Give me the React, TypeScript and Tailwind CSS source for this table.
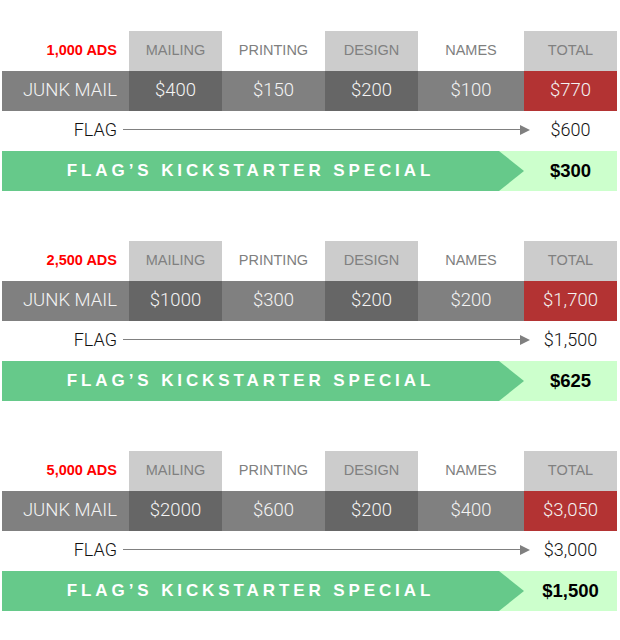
const sections = [
  {
    ads: "1,000 ADS",
    costs: ["$400", "$150", "$200", "$100"],
    total: "$770",
    flag: "$600",
    special: "$300",
  },
  {
    ads: "2,500 ADS",
    costs: ["$1000", "$300", "$200", "$200"],
    total: "$1,700",
    flag: "$1,500",
    special: "$625",
  },
  {
    ads: "5,000 ADS",
    costs: ["$2000", "$600", "$200", "$400"],
    total: "$3,050",
    flag: "$3,000",
    special: "$1,500",
  },
];

const headers = [
  { name: "MAILING", w: "w-[93px]", bg: "bg-[#cccccc]", dark: "bg-[#666666]" },
  { name: "PRINTING", w: "w-[103px]", bg: "bg-white", dark: "bg-[#808080]" },
  { name: "DESIGN", w: "w-[93px]", bg: "bg-[#cccccc]", dark: "bg-[#666666]" },
  { name: "NAMES", w: "w-[106px]", bg: "bg-white", dark: "bg-[#808080]" },
];

const thin = "font-['Roboto','Liberation_Sans',sans-serif] font-light";

function Section({ s }: { s: (typeof sections)[number] }) {
  return (
    <div className="flex flex-col w-[615px]">
      <div className="flex h-[40px] text-[14.5px] text-[#808080] font-['Liberation_Sans',Arial,sans-serif]">
        <div className="w-[127px] flex items-center justify-end pr-[12px] font-bold text-[#ff0000]">
          {s.ads}
        </div>
        {headers.map((h) => (
          <div key={h.name} className={`${h.w} ${h.bg} flex items-center justify-center`}>
            {h.name}
          </div>
        ))}
        <div className="w-[93px] bg-[#cccccc] flex items-center justify-center">TOTAL</div>
      </div>

      <div className={`flex h-[40px] text-[18.5px] text-[#f4f4f4] ${thin}`}>
        <div className="w-[127px] bg-[#808080] flex items-center justify-end pr-[12px]">JUNK MAIL</div>
        {headers.map((h, i) => (
          <div key={h.name} className={`${h.w} ${h.dark} flex items-center justify-center`}>
            {s.costs[i]}
          </div>
        ))}
        <div className="w-[93px] bg-[#b33333] flex items-center justify-center">{s.total}</div>
      </div>

      <div className={`flex h-[40px] items-center pb-[3px] text-[18px] leading-[24px] text-[#111111] ${thin}`}>
        <div className="w-[115px] text-right">FLAG</div>
        <div className="flex-1 flex items-center ml-[6px] mr-[-6px]">
          <div className="flex-1 h-px bg-[#808080]" />
          <svg width="10" height="10" viewBox="0 0 10 10" className="block">
            <path d="M0 0 L10 5 L0 10 Z" fill="#808080" />
          </svg>
        </div>
        <div className="w-[93px] text-center">{s.flag}</div>
      </div>

      <div className="flex h-[40px] bg-[#ccffcc] font-['Liberation_Sans',Arial,sans-serif] font-bold">
        <div className="w-[497px] bg-[#66c98a] flex items-center justify-center text-white text-[17px] tracking-[3.9px]">
          FLAG’S KICKSTARTER SPECIAL
        </div>
        <svg width="25" height="40" viewBox="0 0 25 40" className="block">
          <path d="M0 0 L25 20 L0 40 Z" fill="#66c98a" />
        </svg>
        <div className="w-[93px] flex items-center justify-center text-[18.5px] text-black">{s.special}</div>
      </div>
    </div>
  );
}

export default function App() {
  return (
    <main className="w-[620px] h-[640px] bg-white pt-[31px] pl-[2px] flex flex-col gap-[50px] overflow-hidden">
      {sections.map((s) => (
        <Section key={s.ads} s={s} />
      ))}
    </main>
  );
}
